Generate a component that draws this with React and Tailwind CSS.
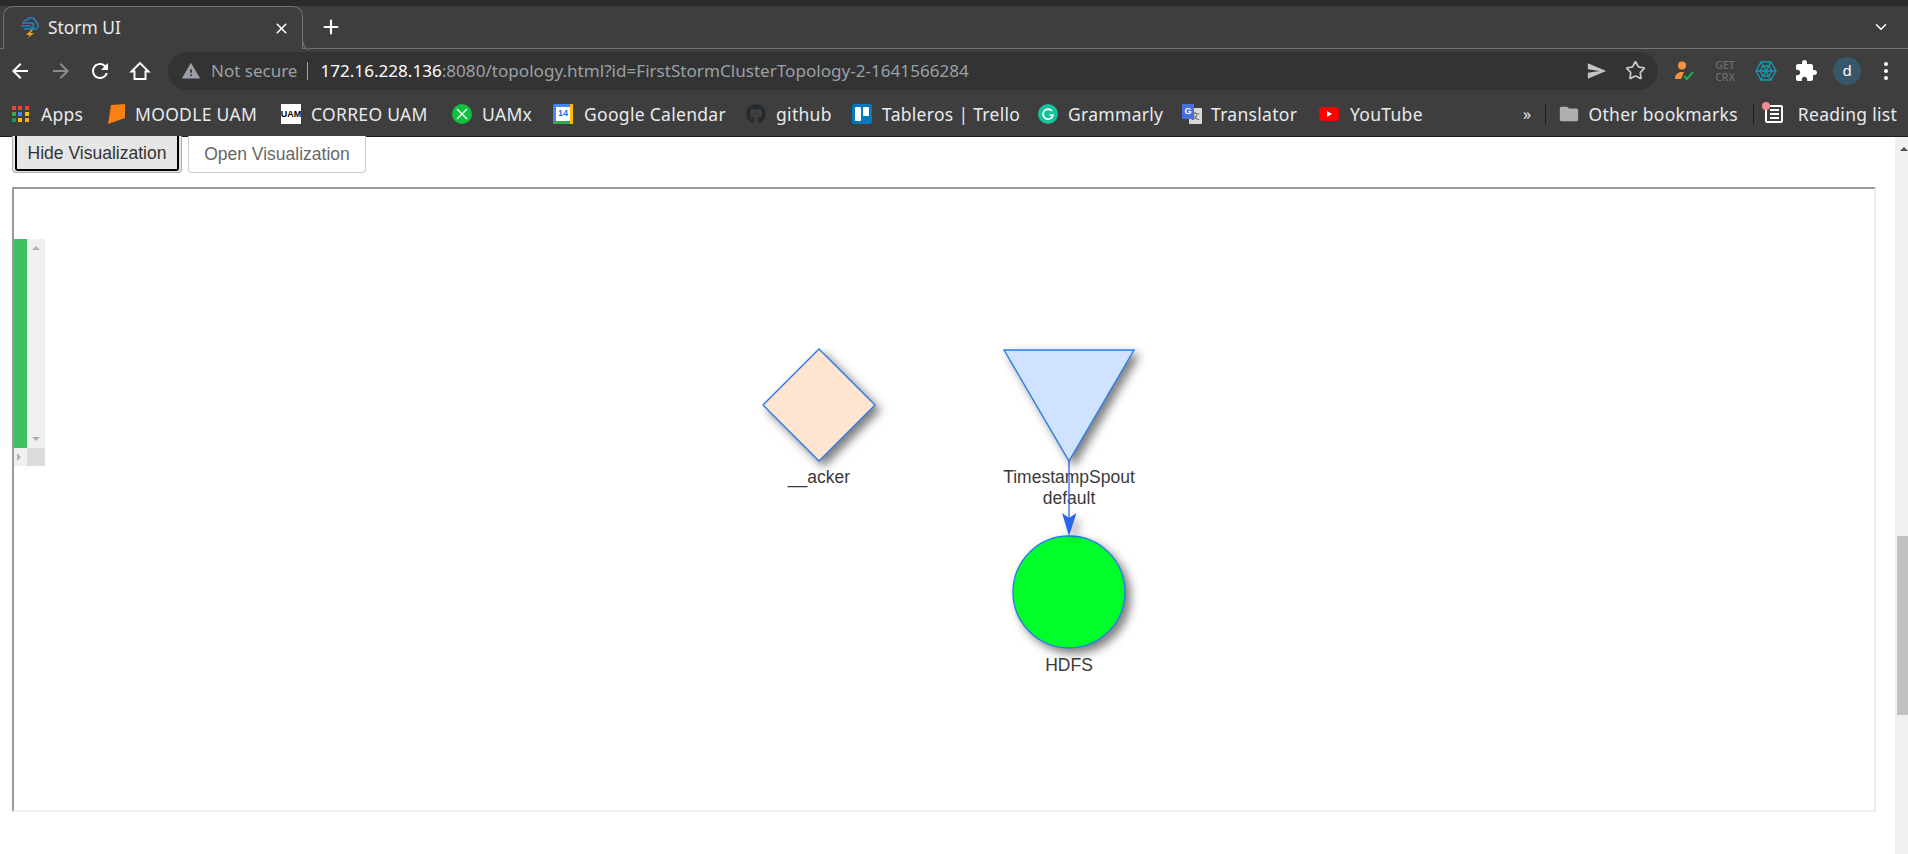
import { FaGithub } from "react-icons/fa";
import { Star, X, Plus, ChevronDown } from "lucide-react";

const UI_FONT = "font-['Noto_Sans',sans-serif]";

const AppsIcon = () => (
  <div className="grid grid-cols-3 gap-[2px] w-[17px]">
    {["bg-[#ea4335]", "bg-[#ea4335]", "bg-[#ea4335]", "bg-[#34a853]", "bg-[#4285f4]", "bg-[#fbbc04]", "bg-[#0f9d58]", "bg-[#fbbc04]", "bg-[#f9a825]"].map((c, i) => (
      <span key={i} className={`w-[4px] h-[4px] ${c}`} />
    ))}
  </div>
);

const MoodleIcon = () => (
  <svg width="20" height="20" viewBox="0 0 20 20"><path d="M5 1 L19 0 L19 14 L2 20 Z" fill="#f98012" /></svg>
);

const UamIcon = () => (
  <div className="w-[20px] h-[20px] bg-white flex items-center justify-center text-[9px] font-bold text-black font-['Liberation_Sans',sans-serif] leading-none tracking-normal">UAM</div>
);

const UamxIcon = () => (
  <svg width="20" height="20" viewBox="0 0 20 20">
    <circle cx="10" cy="10" r="10" fill="#12c040" />
    <path d="M5 5 L15 15 M15 5 L5 15" stroke="#fff" strokeWidth="1.4" />
  </svg>
);

const CalendarIcon = () => (
  <div className="w-[20px] h-[20px] bg-[#4285f4] rounded-[2px] flex items-center justify-center relative tracking-normal">
    <span className="w-[14px] h-[14px] bg-white text-[#1a73e8] text-[9px] font-bold flex items-center justify-center font-['Liberation_Sans',sans-serif]">14</span>
    <span className="absolute right-0 top-0 bottom-0 w-[3px] bg-[#fbbc04]" />
    <span className="absolute left-0 right-[3px] bottom-0 h-[3px] bg-[#34a853]" />
  </div>
);

const TrelloIcon = () => (
  <div className="w-[20px] h-[20px] bg-[#0079bf] rounded-[3px] flex gap-[2px] p-[3px] items-start">
    <span className="w-[6px] h-[14px] bg-white rounded-[1px]" />
    <span className="w-[6px] h-[9px] bg-white rounded-[1px]" />
  </div>
);

const GrammarlyIcon = () => (
  <svg width="20" height="20" viewBox="0 0 20 20">
    <circle cx="10" cy="10" r="10" fill="#15c39a" />
    <path d="M14 7 A5 5 0 1 0 15 11 L11.5 11" fill="none" stroke="#fff" strokeWidth="1.7" />
  </svg>
);

const TranslateIcon = () => (
  <div className="w-[20px] h-[20px] relative tracking-normal">
    <span className="absolute right-0 bottom-0 w-[13px] h-[16px] bg-[#d8d8d8] rounded-[1px] text-[#555] text-[9px] leading-[16px] text-center">文</span>
    <span className="absolute left-0 top-0 w-[12px] h-[15px] bg-[#4a6fe3] rounded-[1px] text-white text-[9px] font-bold leading-[15px] text-center font-['Liberation_Sans',sans-serif]">G</span>
  </div>
);

const YoutubeIcon = () => (
  <svg width="20" height="20" viewBox="0 0 20 20">
    <rect x="0" y="3" width="20" height="14" rx="4" fill="#ff0000" />
    <path d="M8 7 L13 10 L8 13 Z" fill="#fff" />
  </svg>
);

const BOOKMARKS = [
  { label: "Apps", icon: <AppsIcon />, width: "w-[94px]", gap: "gap-[12px]" },
  { label: "MOODLE UAM", icon: <MoodleIcon />, width: "w-[175px]", gap: "gap-[9px]" },
  { label: "CORREO UAM", icon: <UamIcon />, width: "w-[171px]", gap: "gap-[10px]" },
  { label: "UAMx", icon: <UamxIcon />, width: "w-[101px]", gap: "gap-[10px]" },
  { label: "Google Calendar", icon: <CalendarIcon />, width: "w-[193px]", gap: "gap-[11px]" },
  { label: "github", icon: <FaGithub className="w-[20px] h-[20px] text-[#24292e]" />, width: "w-[106px]", gap: "gap-[10px]" },
  { label: "Tableros | Trello", icon: <TrelloIcon />, width: "w-[186px]", gap: "gap-[10px]" },
  { label: "Grammarly", icon: <GrammarlyIcon />, width: "w-[144px]", gap: "gap-[10px]" },
  { label: "Translator", icon: <TranslateIcon />, width: "w-[137px]", gap: "gap-[9px]" },
  { label: "YouTube", icon: <YoutubeIcon />, width: "w-[120px]", gap: "gap-[11px]" },
];

const ToolIcon = ({ d, className = "" }) => (
  <svg width="24" height="24" viewBox="0 0 24 24" fill="currentColor" className={className}><path d={d} /></svg>
);

const Chrome = () => (
  <header className={`${UI_FONT} shrink-0 bg-[#3e3e3e] text-[#e8eaed]`}>
    <div className="h-[6px] bg-[#2b2b2b]" />

    {/* Tab strip */}
    <div className="h-[43px] flex items-end border-b border-[#737373] pl-[3px] pr-[18px]">
      <div className="relative w-[300px] h-[43px] -mb-px bg-[#3e3e3e] border border-b-0 border-[#737373] rounded-t-[10px] flex items-center pl-[14px] pr-[12px] gap-[6px]">
        <svg width="24" height="24" viewBox="0 0 24 24" fill="none" className="shrink-0">
          <path d="M6 13 H18 A4 4 0 0 0 18 6 A5 5 0 0 0 9 4 A4 4 0 0 0 5 8 M3 10 H13 M6 7 H13 A2 2 0 0 1 13 12" stroke="#1c87c9" strokeWidth="1.5" />
          <path d="M13 14 L8 19 H12 L9 23 L16 17 H12 L15 14 Z" fill="#f5a623" />
        </svg>
        <span className="text-[17.4px] leading-none flex-1 text-[#e8eaed]">Storm UI</span>
        <X size={17} strokeWidth={2.2} className="text-white" />
        <span className="absolute -right-[8px] -bottom-px w-[7px] h-[8px] bg-[#3e3e3e] border-l border-b border-[#737373] rounded-bl-[7px]" />
      </div>
      <div className="h-[42px] flex items-center ml-[17px]">
        <Plus size={22} strokeWidth={2.4} className="text-white" />
      </div>
      <div className="h-[42px] flex items-center ml-auto">
        <ChevronDown size={18} strokeWidth={2} className="text-white" />
      </div>
    </div>

    {/* Toolbar */}
    <div className="h-[43px] flex items-center pl-[8px]">
      <ToolIcon className="text-white" d="M20 11H7.83l5.59-5.59L12 4l-8 8 8 8 1.41-1.41L7.83 13H20v-2z" />
      <ToolIcon className="text-[#8c8c8c] ml-[17px]" d="M4 11h12.17l-5.59-5.59L12 4l8 8-8 8-1.41-1.41L16.17 13H4v-2z" />
      <ToolIcon className="text-white ml-[15px]" d="M17.65 6.35A7.958 7.958 0 0012 4c-4.42 0-7.99 3.58-7.99 8s3.57 8 7.99 8c3.73 0 6.84-2.55 7.73-6h-2.08A5.99 5.99 0 0112 18c-3.31 0-6-2.69-6-6s2.69-6 6-6c1.66 0 3.14.69 4.22 1.78L13 11h7V4l-2.35 2.35z" />
      <svg width="24" height="24" viewBox="0 0 24 24" fill="none" stroke="#fff" strokeWidth="1.9" className="ml-[16px]">
        <path d="M12 4 L3.5 12.5 H6.5 V20 H17.5 V12.5 H20.5 Z" strokeLinejoin="miter" />
      </svg>
      <div className="w-[1490px] h-[38px] ml-[16px] rounded-full bg-[#333333] flex items-center pl-[13px] pr-[12px]">
        <ToolIcon className="text-[#9aa0a6] w-[20px] h-[20px]" d="M1 21h22L12 2 1 21zm12-3h-2v-2h2v2zm0-4h-2v-4h2v4z" />
        <span className="text-[17px] text-[#9aa0a6] ml-[10px]">Not secure</span>
        <span className="w-px h-[18px] bg-[#9aa0a6] ml-[10px]" />
        <span className="text-[17.1px] ml-[12px] text-[#9aa0a6] whitespace-nowrap">
          <span className="text-white">172.16.228.136</span>:8080/topology.html?id=FirstStormClusterTopology-2-1641566284
        </span>
        <ToolIcon className="text-[#c4c4c4] ml-auto w-[22px] h-[22px]" d="M2 3.5 L22 12 L2 20.5 L2 14 L15 12 L2 10 Z" />
        <Star size={21} strokeWidth={2} className="text-[#c4c7c5] ml-[17px]" />
      </div>
      <svg width="22" height="24" viewBox="0 0 22 24" className="ml-[16px]">
        <circle cx="8" cy="6.5" r="4" fill="#f6923c" />
        <path d="M1 20 C1 15 4 13 8 13 L10 13 L7 20 Z" fill="#f6923c" />
        <path d="M10 17 L13 20 L19 13" stroke="#1fae54" strokeWidth="2" fill="none" />
      </svg>
      <div className="w-[20px] ml-[19px] text-[10.5px] leading-[12px] text-center font-medium text-[#6f6f6f]">GET<br />CRX</div>
      <svg width="22" height="22" viewBox="0 0 22 22" fill="none" stroke="#129bb0" strokeWidth="1.3" className="ml-[20px]">
        <path d="M6 2 H16 L21 11 L16 20 H6 L1 11 Z" />
        <path d="M8 6 H14 L17 11 L14 16 H8 L5 11 Z" />
        <path d="M1 11 H21 M6 2 L16 20 M16 2 L6 20" />
      </svg>
      <ToolIcon className="text-white ml-[17px]" d="M20.5 11H19V7c0-1.1-.9-2-2-2h-4V3.5C13 2.12 11.88 1 10.5 1S8 2.12 8 3.5V5H4c-1.1 0-1.99.9-1.99 2v3.8H3.5c1.49 0 2.7 1.21 2.7 2.7s-1.21 2.7-2.7 2.7H2V20c0 1.1.9 2 2 2h3.8v-1.5c0-1.49 1.21-2.7 2.7-2.7 1.49 0 2.7 1.21 2.7 2.7V22H17c1.1 0 2-.9 2-2v-4h1.5c1.38 0 2.5-1.12 2.5-2.5S21.88 11 20.5 11z" />
      <div className="w-[28px] h-[28px] ml-[15px] rounded-full bg-[#37586a] flex items-center justify-center text-[15px] text-white">d</div>
      <div className="ml-[23px] flex flex-col gap-[3px]">
        <span className="w-[4px] h-[4px] rounded-full bg-white" />
        <span className="w-[4px] h-[4px] rounded-full bg-white" />
        <span className="w-[4px] h-[4px] rounded-full bg-white" />
      </div>
    </div>

    {/* Bookmarks bar */}
    <div className="h-[45px] flex items-center pl-[12px] border-b border-[#1c1c1c] text-[17.5px] tracking-[0.3px] text-[#e8eaed]">
      {BOOKMARKS.map((b) => (
        <div key={b.label} className={`${b.width} shrink-0 flex items-center ${b.gap} whitespace-nowrap`}>
          {b.icon}
          <span>{b.label}</span>
        </div>
      ))}
      <span className="ml-[84px] text-[16px]">»</span>
      <span className="w-px h-[20px] bg-[#1c1c1c] ml-[14px]" />
      <ToolIcon className="text-[#b0b0b0] ml-[12px] w-[22px] h-[22px]" d="M10 4H4c-1.1 0-2 .9-2 2v12c0 1.1.9 2 2 2h16c1.1 0 2-.9 2-2V8c0-1.1-.9-2-2-2h-8l-2-2z" />
      <span className="ml-[8px] whitespace-nowrap">Other bookmarks</span>
      <span className="w-px h-[20px] bg-[#1c1c1c] ml-[15px]" />
      <div className="relative ml-[11px] w-[18px] h-[18px] border-2 border-white rounded-[2px] flex flex-col justify-center gap-[2px] pl-[3px]">
        <span className="w-[9px] h-[2px] bg-white" />
        <span className="w-[9px] h-[2px] bg-white" />
        <span className="w-[9px] h-[2px] bg-white" />
        <span className="absolute -left-[5px] -top-[5px] w-[8px] h-[8px] rounded-full bg-[#f28b96]" />
      </div>
      <span className="ml-[15px] whitespace-nowrap">Reading list</span>
    </div>
  </header>
);

const Topology = () => (
  <svg viewBox="14 189 1860 620" className="absolute left-0 top-0 w-[1860px] h-[620px] font-['Liberation_Sans',sans-serif]">
    <g fill="#3a3a3a" fontSize="17.5" textAnchor="middle">
      <text x="819" y="483">__acker</text>
      <text x="1069" y="483">TimestampSpout</text>
      <text x="1069" y="504">default</text>
      <text x="1069" y="671">HDFS</text>
    </g>
    <path d="M1069 461 V518" stroke="#2b65ec" strokeOpacity="0.65" strokeWidth="2" />
    <g stroke="#2b7ce9" strokeWidth="1.4" className="drop-shadow-[5px_5px_5px_rgba(0,0,0,0.5)]">
      <path d="M819 349 L875 405 L819 461 L763 405 Z" fill="#ffe5d0" />
      <path d="M1004 350 H1134 L1069 461 Z" fill="#cfe2ff" />
      <circle cx="1069" cy="592" r="56" fill="#00ff2a" />
    </g>
    <path d="M1062 513 L1069 536 L1076.5 513 L1069 518 Z" fill="#2b65ec" className="drop-shadow-[5px_5px_5px_rgba(0,0,0,0.35)]" />
  </svg>
);

// green legend pane sitting at the left of the canvas, with its own scrollbars
const Legend = () => (
  <div className="relative mt-[50px] w-[31px] h-[227px] grid grid-cols-[13px_18px] grid-rows-[209px_18px]">
    <div className="bg-[#3fbf5f]" />
    <div className="bg-[#f0f0f0] flex flex-col items-center justify-between py-[7px]">
      <span className="w-0 h-0 border-x-[4px] border-x-transparent border-b-[4px] border-b-[#b0b0b0]" />
      <span className="w-0 h-0 border-x-[4px] border-x-transparent border-t-[4px] border-t-[#b0b0b0]" />
    </div>
    <div className="bg-[#f0f0f0] flex items-center pl-[3px]">
      <span className="w-0 h-0 border-y-[4px] border-y-transparent border-l-[4px] border-l-[#b0b0b0]" />
    </div>
    <div className="bg-[#dcdcdc]" />
  </div>
);

export default function App() {
  return (
    <div className="h-[854px] w-[1908px] overflow-hidden flex flex-col bg-white">
      <Chrome />
      <div className="flex-1 flex min-h-0">
        <main className="flex-1 pl-[12px] pr-[19px] font-['Liberation_Sans',sans-serif]">
          <div className="flex gap-[6px] h-[37px] -mt-[1px]">
            <button className="w-[170px] h-[37px] rounded-b-[4px] border border-t-0 border-[#adadad] bg-[#e6e6e6] text-[#333] text-[17.5px] relative">
              <span className="absolute inset-x-[2px] top-0 bottom-[1px] pt-[2px] rounded-b-[3px] border-2 border-t-0 border-black flex items-center justify-center">Hide Visualization</span>
            </button>
            <button className="w-[178px] h-[37px] rounded-b-[4px] border border-t-0 border-[#cccccc] bg-white text-[#666] text-[17.5px]">Open Visualization</button>
          </div>
          <div className="relative h-[625px] mt-[14px] border-2 border-t-[#9a9a9a] border-l-[#9a9a9a] border-r-[#eeeeee] border-b-[#eeeeee]">
            <Topology />
            <Legend />
          </div>
        </main>
        <div className="w-[13px] shrink-0 bg-[#f1f1f1] flex flex-col items-end relative">
          <span className="absolute left-[5px] top-[10px] w-0 h-0 border-x-[4px] border-x-transparent border-b-[4px] border-b-[#505050]" />
          <div className="w-[11px] h-[179px] mt-[399px] bg-[#c1c1c1]" />
        </div>
      </div>
    </div>
  );
}
